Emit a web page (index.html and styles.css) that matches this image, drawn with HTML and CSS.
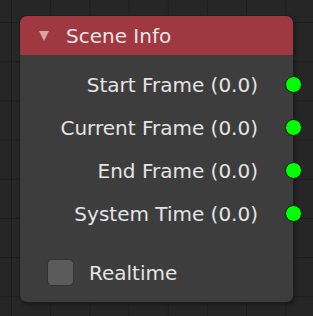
FILE: index.html
```html
<!DOCTYPE html>
<html>
<head>
<meta charset="utf-8">
<link rel="stylesheet" href="styles.css">
</head>
<body>
<div class="node">
  <div class="header">
    <span class="arrow"></span>
    <span class="title">Scene Info</span>
  </div>
  <div class="body">
    <div class="row"><span class="label">Start Frame (0.0)</span><span class="socket"></span></div>
    <div class="row"><span class="label">Current Frame (0.0)</span><span class="socket"></span></div>
    <div class="row"><span class="label">End Frame (0.0)</span><span class="socket"></span></div>
    <div class="row"><span class="label">System Time (0.0)</span><span class="socket"></span></div>
    <div class="check-row"><span class="checkbox"></span><span class="check-label">Realtime</span></div>
  </div>
</div>
</body>
</html>
```
FILE: styles.css
```css
html, body {
  margin: 0;
  padding: 0;
  width: 313px;
  height: 316px;
  overflow: hidden;
}
body {
  background-color: #262626;
  background-image:
    linear-gradient(to right, #1c1c1c 1px, transparent 1px),
    linear-gradient(to bottom, #1c1c1c 1px, transparent 1px);
  background-size: 39.2px 39.2px;
  background-position: 11px 22px;
  font-family: "DejaVu Sans", sans-serif;
  padding: 16px 0 0 20px;
  box-sizing: border-box;
}
.node {
  position: relative;
  width: 273px;
  height: 286px;
  border-radius: 7px;
  background: #3d3d3d;
  box-shadow: 0 0 0 1px #1e1e1e, 2px 3px 4px rgba(0,0,0,0.35);
  display: flex;
  flex-direction: column;
}
.header {
  height: 39px;
  background: #9f3840;
  border-radius: 7px 7px 0 0;
  display: flex;
  align-items: center;
  padding-left: 19px;
  box-sizing: border-box;
}
.arrow {
  width: 0;
  height: 0;
  border-left: 5.5px solid transparent;
  border-right: 5.5px solid transparent;
  border-top: 10px solid #d9a3a8;
  margin-right: 17px;
  margin-top: 1px;
}
.title {
  color: #ece4e5;
  font-size: 20px;
}
.body {
  padding-top: 8px;
  display: flex;
  flex-direction: column;
}
.row {
  height: 43px;
  display: flex;
  align-items: center;
  justify-content: flex-end;
  padding-right: 35px;
  position: relative;
}
.label {
  color: #e4e4e4;
  font-size: 20px;
}
.socket {
  position: absolute;
  right: -8.5px;
  top: 13px;
  width: 15px;
  height: 15px;
  border-radius: 50%;
  background: #00ff00;
  border: 1px solid #111;
}
.check-row {
  margin-top: 16px;
  height: 43px;
  display: flex;
  align-items: center;
  padding-left: 27px;
}
.checkbox {
  width: 27px;
  height: 27px;
  box-sizing: border-box;
  border-radius: 5px;
  background: #5b5b5b;
  border: 1px solid #333;
  margin-right: 15px;
}
.check-label {
  color: #e4e4e4;
  font-size: 20px;
}
```
